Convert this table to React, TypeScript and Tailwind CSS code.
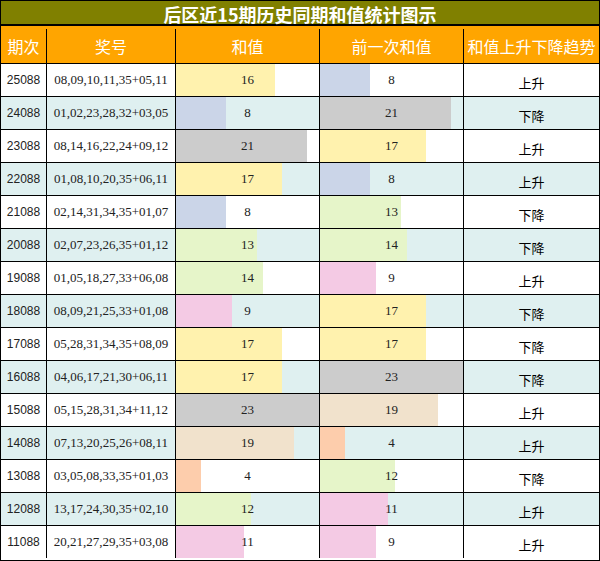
import React from 'react';

type Row = {
  issue: string;
  nums: string;
  sum: number;
  prev: number;
  trend: string;
};

const rows: Row[] = [
  { issue: '25088', nums: '08,09,10,11,35+05,11', sum: 16, prev: 8, trend: '上升' },
  { issue: '24088', nums: '01,02,23,28,32+03,05', sum: 8, prev: 21, trend: '下降' },
  { issue: '23088', nums: '08,14,16,22,24+09,12', sum: 21, prev: 17, trend: '上升' },
  { issue: '22088', nums: '01,08,10,20,35+06,11', sum: 17, prev: 8, trend: '上升' },
  { issue: '21088', nums: '02,14,31,34,35+01,07', sum: 8, prev: 13, trend: '下降' },
  { issue: '20088', nums: '02,07,23,26,35+01,12', sum: 13, prev: 14, trend: '下降' },
  { issue: '19088', nums: '01,05,18,27,33+06,08', sum: 14, prev: 9, trend: '上升' },
  { issue: '18088', nums: '08,09,21,25,33+01,08', sum: 9, prev: 17, trend: '下降' },
  { issue: '17088', nums: '05,28,31,34,35+08,09', sum: 17, prev: 17, trend: '下降' },
  { issue: '16088', nums: '04,06,17,21,30+06,11', sum: 17, prev: 23, trend: '下降' },
  { issue: '15088', nums: '05,15,28,31,34+11,12', sum: 23, prev: 19, trend: '上升' },
  { issue: '14088', nums: '07,13,20,25,26+08,11', sum: 19, prev: 4, trend: '上升' },
  { issue: '13088', nums: '03,05,08,33,35+01,03', sum: 4, prev: 12, trend: '下降' },
  { issue: '12088', nums: '13,17,24,30,35+02,10', sum: 12, prev: 11, trend: '上升' },
  { issue: '11088', nums: '20,21,27,29,35+03,08', sum: 11, prev: 9, trend: '上升' },
];

const MAX = 23;

// pastel palette per value
const barColor = (v: number) => {
  if (v <= 4) return 'bg-[#fdcdac]';
  if (v <= 8) return 'bg-[#cbd5e8]';
  if (v <= 11) return 'bg-[#f4cae4]';
  if (v <= 14) return 'bg-[#e6f5c9]';
  if (v <= 17) return 'bg-[#fff2ae]';
  if (v <= 19) return 'bg-[#f1e2cc]';
  return 'bg-[#cccccc]';
};

const BarCell: React.FC<{ value: number }> = ({ value }) => (
  <div className="relative w-[144px] border-r border-black flex items-center justify-center">
    <div
      className={`absolute left-0 top-0 bottom-0 ${barColor(value)}`}
      style={{ width: `${(value / MAX) * 100}%` }}
    />
    <span className="relative font-['Liberation_Serif',serif] text-[13px] text-[#222]">{value}</span>
  </div>
);

export default function App() {
  return (
    <div className="w-[600px] h-[561px] border border-black bg-white font-['Noto_Sans_CJK_SC',sans-serif]">
      <div className="h-[25px] bg-[#808000] border-b-2 border-black flex items-center justify-center pt-[3px]">
        <span className="text-white font-bold text-[18px] leading-none">后区近15期历史同期和值统计图示</span>
      </div>

      <div className="h-[38px] bg-[#ffa500] border-b border-black flex text-white text-[16px] pt-[3px]">
        <div className="w-[46px] border-r border-black flex items-center justify-center">期次</div>
        <div className="w-[129px] border-r border-black flex items-center justify-center">奖号</div>
        <div className="w-[144px] border-r border-black flex items-center justify-center">和值</div>
        <div className="w-[144px] border-r border-black flex items-center justify-center">前一次和值</div>
        <div className="flex-1 flex items-center justify-center">和值上升下降趋势</div>
      </div>

      {rows.map((r, i) => (
        <div
          key={r.issue}
          className={`flex ${i === rows.length - 1 ? 'h-[32px]' : 'h-[33px] border-b border-black'} ${i % 2 === 1 ? 'bg-[#dff0f0]' : 'bg-white'}`}
        >
          <div className="w-[46px] border-r border-black flex items-center justify-center font-['Liberation_Sans',sans-serif] text-[12px] text-[#222]">
            {r.issue}
          </div>
          <div className="w-[129px] border-r border-black flex items-center justify-center font-['Liberation_Serif',serif] text-[13px] text-[#222]">
            {r.nums}
          </div>
          <BarCell value={r.sum} />
          <BarCell value={r.prev} />
          <div className="flex-1 flex items-center justify-center pt-[5px] text-[13px] text-black">{r.trend}</div>
        </div>
      ))}
    </div>
  );
}
